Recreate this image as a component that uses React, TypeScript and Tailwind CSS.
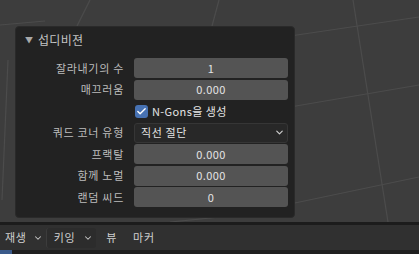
import React from "react";
import { ChevronDown, Check } from "lucide-react";

const font = { fontFamily: '"Noto Sans CJK KR", "Noto Sans", sans-serif' };

function Row({ label, children }: { label: string; children: React.ReactNode }) {
  return (
    <div className="flex h-[20px] items-center">
      <div className="w-[108px] text-right text-[11px] tracking-[0.7px] text-[#bdbdbd] leading-none">{label}</div>
      <div className="ml-[10px] w-[154px] h-full">{children}</div>
    </div>
  );
}

function NumField({ value }: { value: string }) {
  return (
    <div className="h-full rounded-[3px] bg-[#545454] flex items-center justify-center text-[11px] tracking-[0.4px] text-[#e4e4e4] leading-none">
      {value}
    </div>
  );
}

export default function App() {
  return (
    <div className="w-[419px] h-[254px] overflow-hidden flex flex-col bg-[#3d3d3d]" style={font}>
      <div className="relative h-[222px] shrink-0">
        <svg className="absolute inset-0" width="419" height="222">
          <g stroke="#4c4c4c" strokeWidth="1.2" fill="none">
            <line x1="90" y1="0" x2="77" y2="26" />
            <line x1="219" y1="0" x2="212" y2="26" />
            <line x1="0" y1="25" x2="45" y2="21" />
            <line x1="8" y1="60" x2="2" y2="200" />
            <line x1="353" y1="0" x2="388" y2="222" />
            <line x1="290" y1="36" x2="419" y2="17" />
            <line x1="290" y1="107" x2="419" y2="85" />
            <line x1="290" y1="204" x2="419" y2="177" />
            <line x1="170" y1="222" x2="230" y2="216" />
          </g>
        </svg>
        <div className="relative ml-[15px] mt-[26px] w-[280px] h-[192px] rounded-[4px] bg-[#222222] border border-[#2a2a2a] flex flex-col">
          <div className="h-[24px] flex items-center pl-[9px] pt-[1px]">
            <span className="text-[8px] text-[#a8a8a8] leading-none">▼</span>
            <span className="ml-[5px] text-[12px] tracking-[0.3px] text-[#c4c4c4] leading-none">섭디비젼</span>
          </div>
          <div className="mt-[7px] flex flex-col gap-[1.5px]">
            <Row label="잘라내기의 수"><NumField value="1" /></Row>
            <Row label="매끄러움"><NumField value="0.000" /></Row>
            <Row label="">
              <div className="h-full flex items-center pl-[1px]">
                <div className="w-[13px] h-[13px] rounded-[3px] bg-[#4772b3] flex items-center justify-center">
                  <Check size={11} strokeWidth={3} color="#ffffff" />
                </div>
                <span className="ml-[4px] text-[11px] tracking-[0.4px] text-[#e4e4e4] leading-none">N-Gons을 생성</span>
              </div>
            </Row>
            <Row label="쿼드 코너 유형">
              <div className="h-full rounded-[3px] bg-[#282828] border border-[#363636] flex items-center justify-between pl-[6px] pr-[2px] text-[11px] tracking-[0.6px] text-[#e4e4e4] leading-none">
                <span>직선 절단</span>
                <ChevronDown size={11} strokeWidth={2.5} color="#d0d0d0" />
              </div>
            </Row>
            <Row label="프랙탈"><NumField value="0.000" /></Row>
            <Row label="함께 노멀"><NumField value="0.000" /></Row>
            <Row label="랜덤 씨드"><NumField value="0" /></Row>
          </div>
        </div>
      </div>
      <div className="h-[3px] bg-[#1c1c1c]" />
      <div className="h-[25px] bg-[#303030] flex items-center text-[11px] tracking-[0.7px] text-[#cfcfcf] leading-none">
        <div className="flex items-center h-[20px] pl-[5px] pr-[3px]">
          <span>재생</span>
          <ChevronDown size={10} strokeWidth={2.5} className="ml-[6px]" color="#c8c8c8" />
        </div>
        <div className="flex items-center h-[20px] pl-[7px] pr-[3px] bg-[#2c2c2c] border-l border-[#3c3c3c] rounded-[3px]">
          <span>키잉</span>
          <ChevronDown size={10} strokeWidth={2.5} className="ml-[8px]" color="#c8c8c8" />
        </div>
        <span className="ml-[10px]">뷰</span>
        <span className="ml-[16px]">마커</span>
      </div>
      <div className="flex-1 bg-[#1f1f1f] flex">
        <div className="w-[12px] bg-[#3a5a8a]" />
      </div>
    </div>
  );
}
